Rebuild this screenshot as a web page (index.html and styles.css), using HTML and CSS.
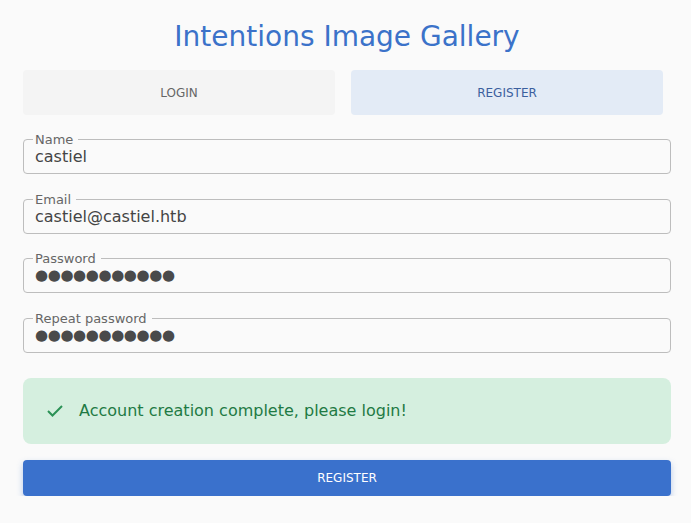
FILE: index.html
```html
<!DOCTYPE html>
<html>
<head>
<meta charset="utf-8">
<link rel="stylesheet" href="styles.css">
</head>
<body>
<main class="page">
  <h1 class="title">Intentions Image Gallery</h1>
  <div class="tabs">
    <div class="tab">LOGIN</div>
    <div class="tab tab-active">REGISTER</div>
  </div>
  <form class="form">
    <fieldset class="field">
      <legend class="label">Name</legend>
      <input class="input" type="text" value="castiel">
    </fieldset>
    <fieldset class="field">
      <legend class="label">Email</legend>
      <input class="input" type="text" value="castiel@castiel.htb">
    </fieldset>
    <fieldset class="field">
      <legend class="label">Password</legend>
      <input class="input input-secret" type="text" value="●●●●●●●●●●●">
    </fieldset>
    <fieldset class="field">
      <legend class="label">Repeat password</legend>
      <input class="input input-secret" type="text" value="●●●●●●●●●●●">
    </fieldset>
    <div class="alert">
      <svg class="alert-icon" viewBox="0 0 16 12" width="16" height="12"><path d="M1 6l4.5 4.5L15 1" fill="none" stroke="currentColor" stroke-width="2"/></svg>
      <span>Account creation complete, please login!</span>
    </div>
    <button class="btn" type="button">REGISTER</button>
  </form>
</main>
</body>
</html>
```
FILE: styles.css
```css
html, body {
  margin: 0;
  background: #fafafa;
}
body {
  font-family: "DejaVu Sans", sans-serif;
}
.page {
  width: 648px;
  margin-left: 23px;
  display: flex;
  flex-direction: column;
}
.title {
  margin: 20px 0 0;
  font-size: 28px;
  font-weight: normal;
  color: #3b72c9;
  text-align: center;
  line-height: 33px;
}
.tabs {
  display: flex;
  gap: 16px;
  padding-right: 8px;
  margin-top: 17px;
}
.tab {
  flex: 1;
  height: 45px;
  display: flex;
  align-items: center;
  justify-content: center;
  font-size: 12px;
  color: #666;
  background: #f4f4f4;
  border-radius: 4px;
}
.tab-active {
  background: #e3ebf6;
  color: #3b5f9e;
}
.form {
  display: flex;
  flex-direction: column;
  margin-top: 17px;
}
.field {
  margin: 0 0 17.7px;
  padding: 0 9px 7px;
  border: 1px solid #bdbdbd;
  border-radius: 4px;
  min-width: 0;
}
.label {
  font-size: 13px;
  line-height: 15px;
  color: #666;
  padding: 0 5px 0 2px;
}
.input {
  display: block;
  width: 100%;
  border: none;
  outline: none;
  background: transparent;
  padding: 0 2px;
  margin: 0;
  font-family: "DejaVu Sans", sans-serif;
  font-size: 16px;
  line-height: 19px;
  height: 19px;
  color: #444;
  box-sizing: border-box;
}
.input-secret {
  font-size: 15px;
  letter-spacing: -0.4px;
  color: #4a4a4a;
}
.alert {
  margin-top: 7px;
  height: 66px;
  box-sizing: border-box;
  display: flex;
  align-items: center;
  gap: 16px;
  padding-left: 24px;
  background: #d5efdf;
  border-radius: 8px;
  color: #1f7a44;
  font-size: 16px;
}
.alert-icon {
  color: #2b9256;
}
.btn {
  margin-top: 16px;
  height: 36px;
  border: none;
  border-radius: 4px;
  background: #3a71cc;
  color: #fff;
  font-family: "DejaVu Sans", sans-serif;
  font-size: 12px;
  box-shadow: 0 3px 6px rgba(58, 113, 204, 0.35);
}
```
